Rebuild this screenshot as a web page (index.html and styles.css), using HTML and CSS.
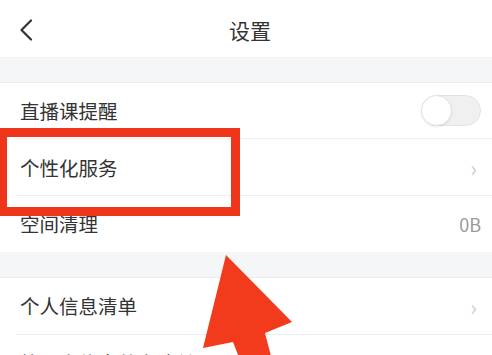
FILE: index.html
```html
<!DOCTYPE html>
<html lang="zh">
<head>
<meta charset="utf-8">
<link rel="stylesheet" href="styles.css">
</head>
<body>
<div class="page">
  <header class="topbar">
    <div class="back">
      <svg width="14" height="22" viewBox="0 0 14 22"><path d="M12 1.5 L2.5 11 L12 20.5" fill="none" stroke="#333" stroke-width="2.2" stroke-linecap="round" stroke-linejoin="round"/></svg>
    </div>
    <div class="title">设置</div>
    <div></div>
  </header>
  <div class="band"></div>
  <section class="group">
    <div class="row"><span class="label">直播课提醒</span><span class="toggle"><span class="knob"></span></span></div>
    <div class="row"><span class="label">个性化服务</span><span class="chev">›</span></div>
    <div class="row"><span class="label">空间清理</span><span class="value">0B</span></div>
  </section>
  <div class="band"></div>
  <section class="group">
    <div class="row"><span class="label">个人信息清单</span><span class="chev">›</span></div>
    <div class="row"><span class="label">第三方信息共享清单</span><span class="chev">›</span></div>
  </section>
  <svg class="annot" width="492" height="355" viewBox="0 0 492 355">
    <rect x="2.5" y="132.5" width="233" height="79" fill="none" stroke="#f0361a" stroke-width="9"/>
    <polygon points="226,255 292,322 265,333 272,360 240,360 233,342 203,348" fill="#f23b1c"/>
  </svg>
</div>
</body>
</html>
```

FILE: styles.css
```css
* { box-sizing: border-box; }
html, body { margin: 0; padding: 0; background: #fff; }
body {
  font-family: "Noto Sans CJK SC", "Noto Sans", sans-serif;
  color: #333;
  width: 492px;
  height: 355px;
  overflow: hidden;
}
.page { position: relative; width: 492px; height: 355px; overflow: hidden; }
.topbar {
  height: 57px;
  display: grid;
  grid-template-columns: 1fr auto 1fr;
  align-items: center;
  padding: 2px 0 0 0;
}
.back { padding-left: 19px; display: flex; align-items: center; }
.title { font-size: 21px; color: #333; padding-left: 8px; }
.band {
  height: 26px;
  background: #f5f6f8;
  border-bottom: 1px solid #ececee;
}
.group { background: #fff; }
.row {
  height: 56.4px;
  margin-left: 16px;
  padding: 0 11px 0 4px;
  display: flex;
  align-items: center;
  justify-content: space-between;
  border-bottom: 1px solid #efefef;
}
.group .row:last-child { border-bottom: none; }
.label { font-size: 19.5px; color: #333; }
.value { font-size: 18px; color: #999; }
.chev { font-size: 22px; color: #cfcfcf; line-height: 1; margin-right: 4px; }
.toggle {
  width: 60px;
  height: 31px;
  border-radius: 16px;
  background: #f0f0f0;
  border: 1px solid #e3e3e3;
  position: relative;
  display: block;
}
.knob {
  position: absolute;
  left: -1px;
  top: -1px;
  width: 31px;
  height: 31px;
  border-radius: 50%;
  background: #fff;
  border: 1px solid #e2e2e2;
  box-shadow: 0 1px 2px rgba(0,0,0,0.08);
}
.annot { position: absolute; left: 0; top: 0; pointer-events: none; }
```
